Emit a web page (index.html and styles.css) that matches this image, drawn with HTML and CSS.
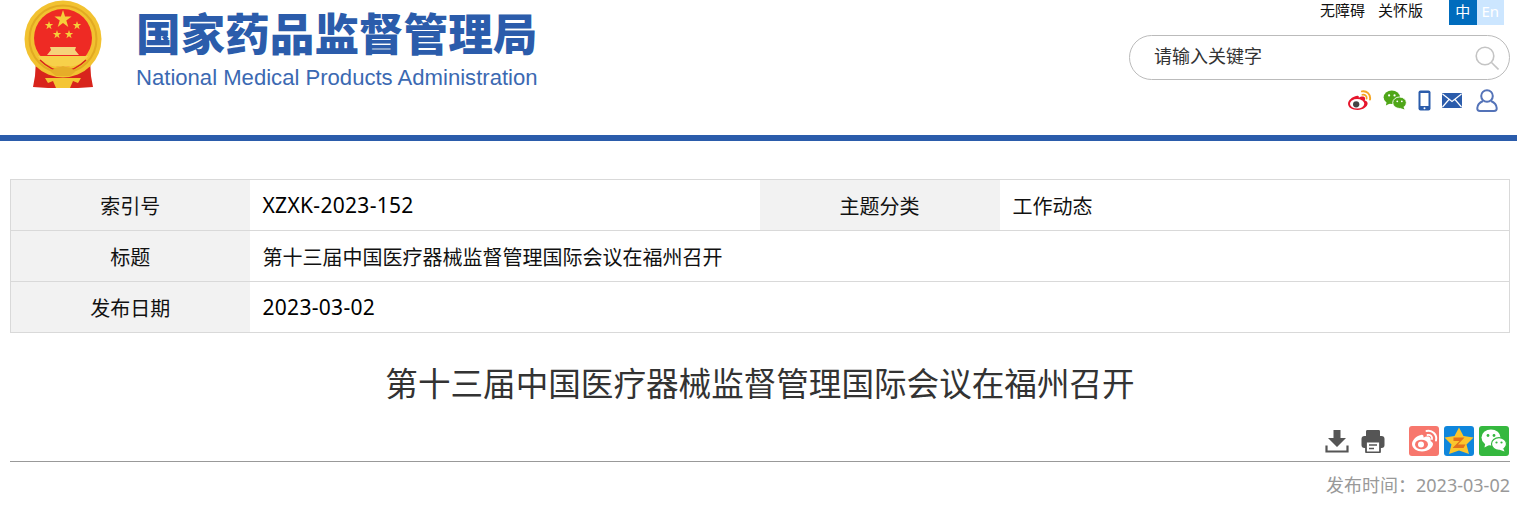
FILE: index.html
```html
<!DOCTYPE html>
<html lang="zh-CN">

<head>
    <meta charset="UTF-8">
    <meta name="viewport" content="width=device-width, initial-scale=1.0">
    <title>第十三届中国医疗器械监督管理国际会议在福州召开</title>
    <link rel="stylesheet" href="styles.css">
</head>

<body>
    <header class="site-header">
        <div class="brand">
            <svg class="emblem" viewBox="0 0 84 90" aria-label="国徽">
                <!-- ribbon -->
                <path d="M12 60 L11 76 L9 87 L24 88 L54 88 L69 87 L67 76 L66 60 Z" fill="#d8241c" />
                <!-- gold ring and red disc -->
                <circle cx="39" cy="39" r="38.500" fill="#f2c230" />
                <circle cx="39" cy="39" r="33.500" fill="none" stroke="#e2aa22" stroke-width="2" />
                <circle cx="39" cy="38" r="29" fill="#ee2a24" />
                <!-- gate -->
                <path d="M26 47 H52 L51 50 L55 55 H23 L27 50 Z" fill="#f6d27a" />
                <path d="M14 56 H64 C60 64 50 67 39 67 C28 67 18 64 14 56 Z" fill="#f7d04a" />
                <path d="M16 60 C24 68 32 71 39 71 C46 71 54 68 62 60" fill="none" stroke="#d8241c" stroke-width="1.500" />
                <!-- knot at the bottom -->
                <path d="M27 72 C31 66 35 68 39 66 C43 68 47 66 51 72 L46 76 H32 Z" fill="#e6ad28" />
                <path d="M21 78 H57 L54 83 L49 81 L46 88 H32 L29 81 L24 83 Z" fill="#f4c534" />
                <!-- stars -->
                <path class="star" d="M39 10 L41.100 16.400 L47.600 16.400 L42.300 20.400 L44.300 27 L39 23 L33.700 27 L35.700 20.400 L30.400 16.400 L36.900 16.400 Z" />
                <path class="star" d="M25 21 L26 24 L29.200 24 L26.600 26 L27.600 29.200 L25 27.200 L22.400 29.200 L23.400 26 L20.800 24 L24 24 Z" />
                <path class="star" d="M53 21 L54 24 L57.200 24 L54.600 26 L55.600 29.200 L53 27.200 L50.400 29.200 L51.400 26 L48.800 24 L52 24 Z" />
                <path class="star" d="M33 30 L34 33 L37.200 33 L34.600 35 L35.600 38.200 L33 36.200 L30.400 38.200 L31.400 35 L28.800 33 L32 33 Z" />
                <path class="star" d="M45 30 L46 33 L49.200 33 L46.600 35 L47.600 38.200 L45 36.200 L42.400 38.200 L43.400 35 L40.800 33 L44 33 Z" />
            </svg>
            <div class="brand-text">
                <div class="brand-cn">国家药品监督管理局</div>
                <div class="brand-en">National Medical Products Administration</div>
            </div>
        </div>

        <div class="header-tools">
            <div class="top-links">
                <a href="#">无障碍</a>
                <a href="#">关怀版</a>
                <div class="lang">
                    <a href="#" class="lang-cn">中</a>
                    <a href="#" class="lang-en">En</a>
                </div>
            </div>
            <div class="search-box">
                <span class="search-text">请输入关键字</span>
                <svg class="search-icon" viewBox="0 0 24 24">
                    <circle cx="10" cy="10" r="8.800" />
                    <path d="M16.500 16.500 L23.500 23.500" />
                </svg>
            </div>
            <div class="social">
                <svg class="weibo" viewBox="0 0 26 22">
                    <path d="M10.500 6 C5 7 1 11 1 14.500 C1 18.500 5.500 21 11 21 C17 21 21.500 17.500 21.500 14 C21.500 12 19.500 11.300 18.500 11 C19.300 9 19 7.500 17.500 7 C16 6.500 13.500 7.300 12.300 8 C12.500 6.500 12 5.700 10.500 6 Z" fill="#e6162d" />
                    <ellipse cx="10.500" cy="14.500" rx="7.500" ry="5" fill="#fff" />
                    <circle cx="9.500" cy="15" r="3.300" fill="#444" />
                    <path d="M15.500 1.500 C20.500 0.500 25 4.500 24 10" fill="none" stroke="#f5a623" stroke-width="2" stroke-linecap="round" />
                    <path d="M16 5 C19 4.500 21 6.500 20.500 9" fill="none" stroke="#f5a623" stroke-width="1.800" stroke-linecap="round" />
                </svg>
                <svg class="wechat" viewBox="0 0 26 22">
                    <ellipse cx="9.500" cy="8" rx="9" ry="7.500" fill="#4fa618" />
                    <path d="M4 12 L3 17 L9 14 Z" fill="#4fa618" />
                    <ellipse cx="18" cy="14" rx="7.500" ry="6.300" fill="#4fa618" stroke="#fff" stroke-width="1" />
                    <path d="M22 18 L23.500 21.500 L18 19.500 Z" fill="#4fa618" />
                    <circle cx="6.500" cy="6" r="1.200" fill="#fff" />
                    <circle cx="12.500" cy="6" r="1.200" fill="#fff" />
                    <circle cx="15.500" cy="12.500" r="1" fill="#fff" />
                    <circle cx="20.500" cy="12.500" r="1" fill="#fff" />
                </svg>
                <svg class="phone" viewBox="0 0 13 21">
                    <rect x="0.500" y="0.500" width="12" height="20" rx="2" fill="#2b5cab" />
                    <rect x="2.500" y="3" width="8" height="13" fill="#fff" />
                    <circle cx="6.500" cy="18.300" r="1" fill="#fff" />
                </svg>
                <svg class="mail" viewBox="0 0 20 15">
                    <rect width="20" height="15" rx="1" fill="#2b5cab" />
                    <path d="M0.500 1 L10 8.500 L19.500 1 M0.500 14 L7 6.500 M19.500 14 L13 6.500" fill="none" stroke="#fff" stroke-width="1.200" />
                </svg>
                <svg class="user" viewBox="0 0 22 23">
                    <circle cx="11" cy="7" r="5.800" />
                    <path d="M7 12 C3.500 13.500 1.500 16 1.300 19 C1.200 21 2 22 4 22 H18 C20 22 20.800 21 20.700 19 C20.500 16 18.500 13.500 15 12" />
                </svg>
            </div>
        </div>
    </header>

    <main class="content">
        <table class="meta-table">
            <colgroup>
                <col class="col-first">
                <col class="col-value">
                <col class="col-label">
                <col>
            </colgroup>
            <tr>
                <th>索引号</th>
                <td class="latin">XZXK-2023-152</td>
                <th>主题分类</th>
                <td>工作动态</td>
            </tr>
            <tr>
                <th>标题</th>
                <td colspan="3">第十三届中国医疗器械监督管理国际会议在福州召开</td>
            </tr>
            <tr>
                <th>发布日期</th>
                <td colspan="3" class="latin">2023-03-02</td>
            </tr>
        </table>

        <h1 class="article-title">第十三届中国医疗器械监督管理国际会议在福州召开</h1>

        <div class="article-tools">
            <svg class="tool-icon" viewBox="0 0 24 24">
                <path d="M8.500 1 H15.500 V9 H21 L12 18 L3 9 H8.500 Z" fill="#555" />
                <path d="M1.500 16.500 V22.500 H22.500 V16.500" fill="none" stroke="#555" stroke-width="2.200" />
            </svg>
            <svg class="tool-icon print" viewBox="0 0 24 24">
                <path d="M5 7 V2.500 C5 1.500 5.500 1 6.500 1 H17.500 C18.500 1 19 1.500 19 2.500 V7 Z" fill="#555" />
                <rect x="0.500" y="7" width="23" height="12" rx="3" fill="#555" />
                <rect x="5" y="12.500" width="14" height="11" rx="1" fill="#fff" stroke="#555" stroke-width="1.800" />
                <path d="M8 16 H16 M8 19.500 H13" stroke="#555" stroke-width="1.500" />
            </svg>
            <span class="share share-weibo">
                <svg viewBox="0 0 30 30">
                    <path d="M12 9 C7 10 3 14.500 3 18 C3 22.500 8 25.500 13 25.500 C19.500 25.500 24 21 24 18 C24 16.500 22.500 15.500 21.500 15 C22.500 12.500 21 10.500 18.500 10.500 C17 10.500 15.500 11 14.500 11.500 C14.800 9.500 14 8.500 12 9 Z" fill="#fff" />
                    <ellipse cx="12.500" cy="18.500" rx="6.500" ry="4.800" fill="#f7776d" />
                    <circle cx="12" cy="18.500" r="3" fill="#fff" />
                    <path d="M17.500 5 C23 3.500 28.500 8.500 27 14.500" fill="none" stroke="#fff" stroke-width="2" stroke-linecap="round" />
                    <path d="M18.500 9 C21.500 8.500 23.500 10.500 23 13" fill="none" stroke="#fff" stroke-width="1.800" stroke-linecap="round" />
                </svg>
            </span>
            <span class="share share-qzone">
                <svg viewBox="0 0 30 30">
                    <path d="M15 1.500 L19.500 10 L29.500 11.500 L22.500 18.500 L25 28 L15 24.500 L5 28 L7.500 18.500 L0.500 11.500 L10.500 10 Z" fill="#fbc52d" />
                    <path d="M9.500 11.500 H20.500 L14 18.500 H21.500 L19.500 22 H8.500 L15.500 15 H9.500 Z" fill="#e2711d" />
                </svg>
            </span>
            <span class="share share-wechat">
                <svg viewBox="0 0 30 30">
                    <ellipse cx="12" cy="11.500" rx="9.500" ry="8" fill="#fff" />
                    <path d="M6.500 16 L5.500 21.500 L12 18 Z" fill="#fff" />
                    <ellipse cx="20" cy="18" rx="7.500" ry="6.300" fill="#fff" stroke="#35b83f" stroke-width="1.200" />
                    <path d="M24 22 L25.500 25.500 L20 23.500 Z" fill="#fff" />
                    <circle cx="9" cy="9.500" r="1.400" fill="#35b83f" />
                    <circle cx="15" cy="9.500" r="1.400" fill="#35b83f" />
                    <circle cx="17.500" cy="16.500" r="1.100" fill="#35b83f" />
                    <circle cx="22.500" cy="16.500" r="1.100" fill="#35b83f" />
                </svg>
            </span>
        </div>

        <div class="publish-time">发布时间：2023-03-02</div>
    </main>
</body>

</html>
```

FILE: styles.css
```css
:root {
    --brand-blue: #2b5cab;
    --border-color: #d9d9d9;
    --label-bg: #f2f2f2;
}

* {
    margin: 0;
    padding: 0;
    box-sizing: border-box;
}

body {
    font-family: "Noto Sans", "Noto Sans CJK SC", sans-serif;
    color: #222;
    background-color: white;
}

a {
    color: inherit;
    text-decoration: none;
}

.site-header {
    height: 141px;
    display: flex;
    justify-content: space-between;
    border-bottom: 6px solid var(--brand-blue);
    padding-left: 24px;
    padding-right: 7px;
}

.brand {
    display: flex;
    align-items: flex-start;
}

.emblem {
    width: 84px;
    height: 90px;
    margin-right: 28px;
}

.star {
    fill: #f6cf3a;
}

.brand-text {
    padding-top: 6px;
}

.brand-cn {
    font-family: "Noto Sans CJK SC", sans-serif;
    font-size: 44.600px;
    font-weight: 900;
    line-height: 52px;
    color: var(--brand-blue);
    white-space: nowrap;
}

.brand-en {
    font-family: "Liberation Sans", sans-serif;
    font-size: 22.100px;
    line-height: 28px;
    margin-top: 6px;
    color: #3b69b2;
    white-space: nowrap;
}

.header-tools {
    width: 381px;
    display: flex;
    flex-direction: column;
    align-items: flex-end;
}

.top-links {
    height: 25px;
    display: flex;
    align-items: center;
    font-size: 15px;
    color: #111;
}

.top-links > a {
    margin-right: 13px;
    margin-top: -6px;
}

.lang {
    display: flex;
    margin-left: 13px;
    margin-right: 6px;
}

.lang a {
    width: 27.500px;
    height: 25px;
    line-height: 22px;
    text-align: center;
    color: white;
}

.lang-cn {
    background-color: #006cbd;
}

.lang-en {
    background-color: #cce6ff;
}

.search-box {
    width: 381px;
    height: 45px;
    margin-top: 10px;
    border: 1px solid #bbb;
    border-radius: 23px;
    display: flex;
    align-items: center;
    justify-content: space-between;
    padding-left: 24px;
    padding-right: 10px;
}

.search-text {
    font-size: 18px;
    line-height: 24px;
    margin-bottom: 4px;
    color: #333;
}

.search-icon {
    width: 24px;
    height: 24px;
    fill: none;
    stroke: #c4c4c4;
    stroke-width: 1.600;
}

.social {
    display: flex;
    align-items: center;
    height: 24px;
    margin-top: 8px;
    margin-right: 12px;
}

.weibo {
    width: 25px;
    height: 21px;
    margin-right: 11px;
}

.wechat {
    width: 24px;
    height: 20px;
    margin-right: 11px;
}

.phone {
    width: 13px;
    height: 21px;
    margin-right: 11px;
}

.mail {
    width: 20px;
    height: 15px;
    margin-right: 14px;
}

.user {
    width: 22px;
    height: 23px;
    fill: none;
    stroke: #5473b8;
    stroke-width: 2;
}

.content {
    padding: 38px 7px 0 10px;
}

.meta-table {
    width: 1500px;
    table-layout: fixed;
    border-collapse: collapse;
    border: 1px solid var(--border-color);
    font-size: 20px;
    color: #111;
}

.col-first {
    width: 239px;
}

.col-label {
    width: 240px;
}

.col-value {
    width: 510px;
}

.meta-table tr {
    height: 51px;
    border-bottom: 1px solid var(--border-color);
}

.meta-table th {
    font-weight: normal;
    background-color: var(--label-bg);
}

.meta-table td {
    padding-left: 13px;
}

.meta-table td.latin {
    font-size: 21px;
    letter-spacing: 0.300px;
    color: black;
}

.article-title {
    width: 1500px;
    margin-top: 26px;
    font-size: 32.600px;
    font-weight: normal;
    line-height: 50px;
    text-align: center;
    color: #333;
}

.article-tools {
    width: 1500px;
    height: 53px;
    padding-bottom: 5px;
    padding-right: 1px;
    display: flex;
    align-items: flex-end;
    justify-content: flex-end;
    border-bottom: 1px solid #999;
}

.tool-icon {
    width: 24px;
    height: 24px;
    margin-right: 12px;
    margin-bottom: 3px;
}

.tool-icon.print {
    margin-right: 24px;
}

.share {
    width: 30px;
    height: 30px;
    border-radius: 3px;
    margin-left: 5px;
    display: flex;
}

.share svg {
    width: 30px;
    height: 30px;
}

.share-weibo {
    margin-left: 0;
    background-color: #f7776d;
}

.share-qzone {
    background-color: #0f86dc;
}

.share-wechat {
    background-color: #35b83f;
}

.publish-time {
    width: 1500px;
    margin-top: 9px;
    font-size: 18px;
    line-height: 28px;
    text-align: right;
    color: #999;
}
```
